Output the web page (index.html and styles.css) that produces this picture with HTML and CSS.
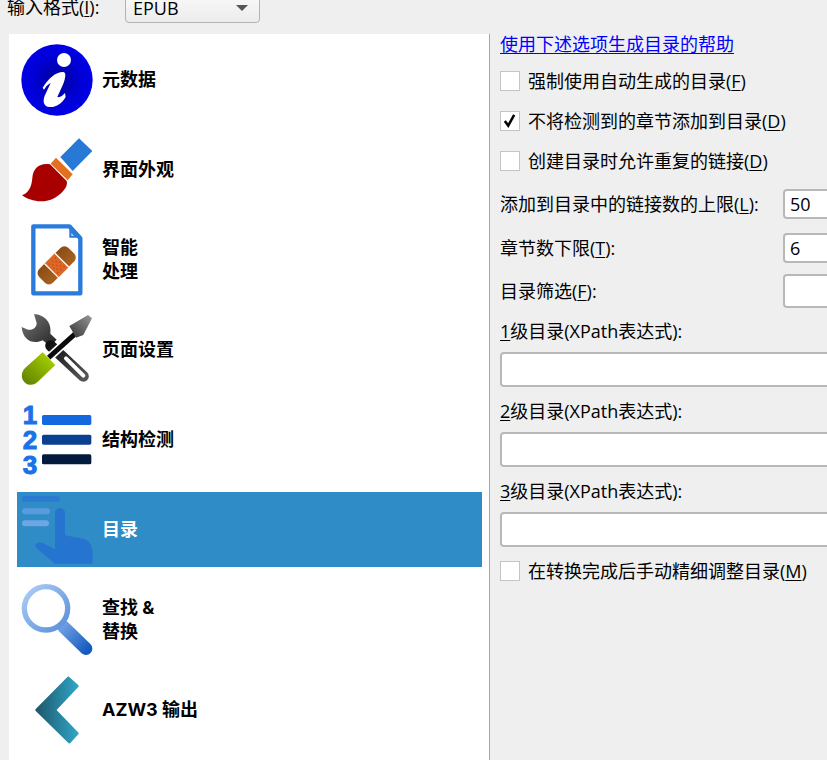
FILE: index.html
```html
<!DOCTYPE html>
<html lang="zh">
<head>
<meta charset="utf-8">
<title>转换</title>
<link rel="stylesheet" href="styles.css">
</head>
<body>
<div class="app">
  <div class="bar">
    <span class="bar-label">输入格式(<u>I</u>):</span>
    <div class="combo"><span>EPUB</span><i class="arrow"></i></div>
  </div>
  <div class="main">
    <ul class="nav">
      <li class="item">
        <svg class="icon" viewBox="63 129 216 216">
          <defs><radialGradient id="g1"><stop offset="0" stop-color="#000096"/><stop offset="0.7" stop-color="#0000d8"/><stop offset="1" stop-color="#0000e6"/></radialGradient></defs>
          <circle cx="171" cy="237" r="107" fill="url(#g1)"/>
          <circle cx="192" cy="177" r="21" fill="#fff"/>
          <path d="M128 260C145 232 168 212 190 213C200 214 196 232 190 248L172 288C180 290 188 284 195 276L197 288C185 308 168 320 148 318C130 316 128 300 134 284L152 246C144 250 138 256 132 266Z" fill="#fff"/>
        </svg>
        <span class="name">元数据</span>
      </li>
      <li class="item">
        <svg class="icon" viewBox="63 399 216 216">
          <path d="M237 412L277 450L218 510L181 468Z" fill="#2878d6"/>
          <path d="M168 470L218 520L203 538L152 488Z" fill="#e2701f"/>
          <path d="M150 490C120 485 100 500 97 530C95 560 85 575 66 583C90 600 130 610 165 590C190 575 205 555 200 540Z" fill="#a80000"/>
        </svg>
        <span class="name">界面外观</span>
      </li>
      <li class="item">
        <svg class="icon" viewBox="63 39 216 216">
          <defs><linearGradient id="g3" x1="0" y1="0" x2="0" y2="1"><stop offset="0" stop-color="#8a4c16"/><stop offset="1" stop-color="#a8621f"/></linearGradient></defs>
          <path d="M100 46H208L241 82V247H100Z" fill="#fff" stroke="#2a7bdc" stroke-width="13" stroke-linejoin="round"/>
          <path d="M208 50V80H238Z" fill="#2a7bdc"/>
          <path d="M214 66V74H222Z" fill="#cfe0f6"/>
          <g transform="rotate(-45 170 163)">
            <rect x="108" y="134" width="124" height="58" rx="17" fill="url(#g3)"/>
            <rect x="149" y="134" width="42" height="58" fill="#d9692a"/>
            <rect x="146" y="134" width="4" height="58" fill="#fff"/>
            <rect x="190" y="134" width="4" height="58" fill="#fff"/>
            <path d="M155 143h4v4h-4zM168 143h4v4h-4zM181 143h4v4h-4zM155 161h4v4h-4zM168 161h4v4h-4zM181 161h4v4h-4zM155 179h4v4h-4zM168 179h4v4h-4zM181 179h4v4h-4zM161 152h4v4h-4zM175 152h4v4h-4zM161 170h4v4h-4zM175 170h4v4h-4z" fill="#e33c00"/>
          </g>
        </svg>
        <span class="name">智能<br>处理</span>
      </li>
      <li class="item">
        <svg class="icon" viewBox="63 309 216 216">
          <defs>
            <linearGradient id="g4a" x1="0" y1="0" x2="1" y2="1"><stop offset="0" stop-color="#777"/><stop offset="1" stop-color="#222"/></linearGradient>
            <linearGradient id="g4b" gradientUnits="userSpaceOnUse" x1="150" y1="400" x2="250" y2="500"><stop offset="0" stop-color="#111"/><stop offset="1" stop-color="#555"/></linearGradient>
            <linearGradient id="g4c" x1="1" y1="0" x2="0" y2="1"><stop offset="0" stop-color="#b0dc00"/><stop offset="1" stop-color="#5c7c00"/></linearGradient>
            <linearGradient id="g4d" x1="1" y1="0" x2="0" y2="1"><stop offset="0" stop-color="#999"/><stop offset="1" stop-color="#333"/></linearGradient>
          </defs>
          <path d="M102 310C132 310 156 334 151 368L170 386L150 406L128 388C100 402 68 388 65 348L84 356C98 358 110 350 110 336Z" fill="url(#g4a)"/>
          <path d="M152 404L250 496" stroke="url(#g4b)" stroke-width="33" stroke-linecap="round" fill="none"/>
          <path d="M198 442L250 494" stroke="#fff" stroke-width="12" stroke-linecap="round" fill="none"/>
          <path d="M140 446L232 362" stroke="#fff" stroke-width="25" fill="none"/>
          <path d="M146 440L226 368" stroke="#0b0b0b" stroke-width="15" fill="none"/>
          <path d="M208 345L264 312L276 322L250 372L228 380Z" fill="url(#g4d)"/>
          <path d="M128 424L166 462L112 514C96 528 72 522 66 500C64 488 68 478 76 470Z" fill="url(#g4c)"/>
        </svg>
        <span class="name">页面设置</span>
      </li>
      <li class="item">
        <svg class="icon" viewBox="63 579 216 216">
          <text class="digit" x="68" y="640">1</text>
          <text class="digit" x="68" y="714">2</text>
          <text class="digit" x="68" y="788">3</text>
          <rect x="126" y="612" width="148" height="30" rx="5" fill="#1368e0"/>
          <rect x="126" y="671" width="148" height="30" rx="5" fill="#0b3f8f"/>
          <rect x="126" y="730" width="148" height="30" rx="5" fill="#021a3d"/>
        </svg>
        <span class="name">结构检测</span>
      </li>
      <li class="item active">
        <svg class="icon" viewBox="63 24 216 216">
          <rect x="66" y="30" width="114" height="17" rx="8" fill="#2a7bd0"/>
          <rect x="66" y="67" width="84" height="18" rx="9" fill="#5a9be0"/>
          <rect x="66" y="103" width="81" height="18" rx="9" fill="#6ca6e4"/>
          <path d="M165 80C165 62 195 62 195 80V148L250 158C268 162 278 180 278 200V233H165L108 185C100 175 115 165 130 172L165 190Z" fill="#2575d0"/>
        </svg>
        <span class="name">目录</span>
      </li>
      <li class="item">
        <svg class="icon" viewBox="63 294 216 216">
          <defs>
            <linearGradient id="g7a" gradientUnits="userSpaceOnUse" x1="80" y1="310" x2="200" y2="430"><stop offset="0" stop-color="#a9caf5"/><stop offset="1" stop-color="#5a8fd8"/></linearGradient>
            <linearGradient id="g7b" gradientUnits="userSpaceOnUse" x1="185" y1="420" x2="265" y2="495"><stop offset="0" stop-color="#6fa0e2"/><stop offset="1" stop-color="#1459bf"/></linearGradient>
          </defs>
          <path d="M190 422L258 488" stroke="url(#g7b)" stroke-width="38" stroke-linecap="round" fill="none"/>
          <circle cx="138" cy="367" r="65" fill="#fff" stroke="url(#g7a)" stroke-width="16"/>
        </svg>
        <span class="name">查找 &amp;<br>替换</span>
      </li>
      <li class="item">
        <svg class="icon" viewBox="63 564 216 216">
          <defs><linearGradient id="g8" gradientUnits="userSpaceOnUse" x1="105" y1="672" x2="237" y2="672"><stop offset="0" stop-color="#1d5469"/><stop offset="1" stop-color="#31a8c8"/></linearGradient></defs>
          <path d="M110 672L205 576L232 600L164 672L232 742L208 768Z" fill="url(#g8)" stroke="url(#g8)" stroke-width="8" stroke-linejoin="round"/>
        </svg>
        <span class="name">AZW3 输出</span>
      </li>
    </ul>
    <section class="pane">
      <a class="link" href="#">使用下述选项生成目录的帮助</a>
      <label class="opt first"><i class="box"></i>强制使用自动生成的目录(<u>F</u>)</label>
      <label class="opt"><i class="box"><svg class="tick" viewBox="0 0 20 20"><path d="M4.5 10.5L8.5 16L15.5 3.5" fill="none" stroke="#000" stroke-width="3"/></svg></i>不将检测到的章节添加到目录(<u>D</u>)</label>
      <label class="opt"><i class="box"></i>创建目录时允许重复的链接(<u>D</u>)</label>
      <div class="row r-limit"><span class="lbl">添加到目录中的链接数的上限(<u>L</u>):</span><div class="input short">50</div></div>
      <div class="row r-min"><span class="lbl">章节数下限(<u>T</u>):</span><div class="input short">6</div></div>
      <div class="row r-filter"><span class="lbl">目录筛选(<u>F</u>):</span><div class="input filter"></div></div>
      <div class="cap c-first"><u>1</u>级目录(XPath表达式):</div>
      <div class="input wide"></div>
      <div class="cap"><u>2</u>级目录(XPath表达式):</div>
      <div class="input wide"></div>
      <div class="cap"><u>3</u>级目录(XPath表达式):</div>
      <div class="input wide"></div>
      <label class="opt last"><i class="box"></i>在转换完成后手动精细调整目录(<u>M</u>)</label>
    </section>
  </div>
</div>
</body>
</html>
```
FILE: styles.css
```css
* { box-sizing: border-box; }
html, body { margin: 0; padding: 0; }
body {
  background: #efefef;
  color: #000;
  font-family: "Open Sans", "Noto Sans CJK SC", sans-serif;
  font-size: 18px;
  line-height: 24px;
}
u { text-underline-offset: 2px; text-decoration-thickness: 1px; }
.app { width: 827px; height: 760px; overflow: hidden; }

.bar { height: 34px; display: flex; align-items: flex-start; padding-left: 7px; }
.bar-label { width: 118px; margin-top: -5px; }
.combo {
  width: 135px; height: 30px; margin-top: -7px;
  padding: 0 11px 0 7px;
  display: flex; align-items: center; justify-content: space-between;
  border: 1.5px solid #b3b3b3; border-radius: 4px;
  background: linear-gradient(#fafafa, #ececec);
}
.arrow { width: 0; height: 0; border: 6.5px solid transparent; border-top: 6px solid #555; border-bottom: 0; }

.main { display: flex; height: 726px; }
.nav {
  width: 480px; margin: 0 0 0 9px; padding: 8px 7px 0 8px;
  background: #fff; list-style: none;
  display: flex; flex-direction: column; gap: 15px;
  overflow: hidden;
}
.item { height: 75px; flex: none; display: flex; align-items: center; padding-left: 4px; gap: 9px; font-weight: 700; }
.item.active { background: #308cc6; color: #fff; }
.name { font-family: Inter, "Noto Sans CJK SC", sans-serif; }
.icon { width: 72px; height: 72px; flex: none; }
.digit { font-family: "Liberation Sans", sans-serif; font-weight: 700; font-size: 78px; fill: #1a72e8; stroke: #1a72e8; stroke-width: 3px; }

.pane {
  flex: 1; min-width: 0; overflow: hidden;
  border-left: 1px solid #a6a6a6;
  padding-left: 10px;
  display: flex; flex-direction: column;
}
.link { color: #0000ff; line-height: 20px; height: 20px; text-underline-offset: 2px; }
.opt { display: flex; align-items: center; height: 24px; margin-top: 16px; white-space: nowrap; }
.opt.first { margin-top: 15px; }
.opt.last { margin-top: 12px; }
.box {
  width: 20px; height: 20px; margin-right: 8px; flex: none;
  background: #fff; border: 1.5px solid #c4c4c4;
  display: block;
}
.tick { display: block; width: 17px; height: 17px; }

.row { display: flex; align-items: center; white-space: nowrap; }
.lbl { width: 283px; flex: none; }
.r-limit { margin-top: 16px; }
.r-min { margin-top: 14px; }
.r-filter { margin-top: 11px; }
.input {
  flex: none; background: #fff;
  border: 2px solid #b8b8b8; border-radius: 4px;
  padding-left: 5px;
  display: flex; align-items: center;
}
.short { width: 60px; height: 30px; }
.filter { width: 60px; height: 34px; }
.wide { width: 360px; height: 35px; }
.cap { height: 24px; margin-top: 12px; white-space: nowrap; }
.cap.c-first { margin-top: 11px; }
.cap + .wide { margin-top: 9px; }
```
